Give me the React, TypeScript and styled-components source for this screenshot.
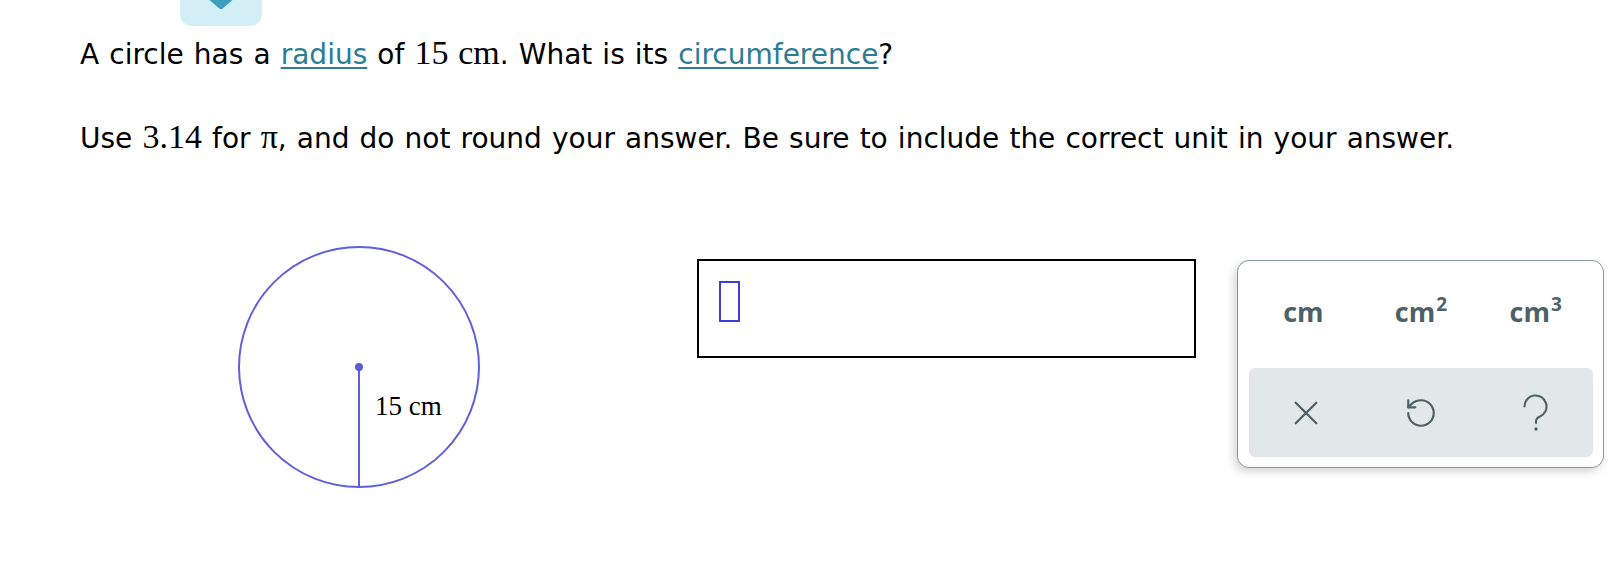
import React from "react";
import styled, { createGlobalStyle } from "styled-components";

const GlobalStyle = createGlobalStyle`
  html, body { margin: 0; padding: 0; background: #ffffff; }
  body { font-family: "DejaVu Sans", Verdana, sans-serif; color: #000; }
`;

const Page = styled.div`
  width: 1610px;
  height: 573px;
  overflow: hidden;
  padding-left: 80px;
  box-sizing: border-box;
`;

const TabRow = styled.div`
  height: 26px;
  padding-left: 100px;
`;

const Tab = styled.div`
  width: 82px;
  height: 26px;
  background: #d4eef5;
  border-radius: 0 0 12px 12px;
  display: flex;
  justify-content: center;
  align-items: flex-start;
`;

const Line = styled.p<{ $gap: number }>`
  margin: ${(p) => p.$gap}px 0 0;
  font-size: 28px;
  line-height: 40px;
  word-spacing: 1.2px;
  white-space: nowrap;
`;

const MathText = styled.span`
  font-family: "Liberation Serif", "Times New Roman", serif;
  font-size: 34px;
  line-height: 0;
`;

const Term = styled.span`
  color: #2b7d94;
  text-decoration: underline;
  text-decoration-thickness: 1.5px;
  text-underline-offset: 3px;
`;

const FigureRow = styled.div`
  margin-top: 83px;
  display: flex;
  align-items: flex-start;
`;

const Figure = styled.svg`
  margin-left: 154px;
  flex: none;
`;

const AnswerBox = styled.div`
  margin-left: 213px;
  margin-top: 17px;
  width: 499px;
  height: 99px;
  box-sizing: border-box;
  border: 2px solid #000;
  padding: 20px 0 0 20px;
  flex: none;
`;

const Cursor = styled.div`
  width: 21px;
  height: 41px;
  box-sizing: border-box;
  border: 2px solid #3d3dd4;
`;

const Keypad = styled.div`
  margin-left: 41px;
  margin-top: 18px;
  width: 367px;
  height: 208px;
  box-sizing: border-box;
  border: 1.5px solid #8a979b;
  border-radius: 12px;
  box-shadow: -3px 4px 9px rgba(0, 0, 0, 0.16);
  padding: 0 10px 10px 11px;
  display: flex;
  flex-direction: column;
  flex: none;
  background: #fff;
`;

const UnitRow = styled.div`
  flex: 1;
  display: grid;
  grid-template-columns: repeat(3, 1fr);
  align-items: center;
`;

const UnitKey = styled.div<{ $shift?: number }>`
  font-family: "Open Sans", Lato, sans-serif;
  font-weight: 700;
  font-size: 27px;
  line-height: 1;
  color: #4d6267;
  text-align: center;
  margin-top: -6px;
  margin-left: ${(p) => p.$shift ?? 0}px;
`;

const Sup = styled.sup`
  font-size: 19px;
  line-height: 0;
  vertical-align: 11px;
  margin-left: 1px;
`;

const ActionRow = styled.div`
  height: 89px;
  flex: none;
  background: #e2e7e9;
  border-radius: 6px;
  display: grid;
  grid-template-columns: repeat(3, 1fr);
  align-items: center;
  justify-items: center;
`;

const IconSvg = styled.svg`
  display: block;
  stroke: #4d6267;
  fill: none;
  stroke-linecap: round;
  stroke-linejoin: round;
`;

export default function App() {
  return (
    <>
      <GlobalStyle />
      <Page>
        <TabRow>
          <Tab>
            <svg width="24" height="10" viewBox="0 0 24 10">
              <path d="M0.5 0 H23.5 L13.6 8.6 Q12 9.8 10.4 8.6 Z" fill="#3c9fbf" />
            </svg>
          </Tab>
        </TabRow>
        <Line $gap={9}>
          A circle has a <Term>radius</Term> of <MathText>15 cm</MathText>. What is its{" "}
          <Term>circumference</Term>?
        </Line>
        <Line $gap={44}>
          Use <MathText>3.14</MathText> for <MathText>π</MathText>, and do not round your answer. Be
          sure to include the correct unit in your answer.
        </Line>
        <FigureRow>
          <Figure width="250" height="250" viewBox="0 0 250 250">
            <circle cx="125" cy="125" r="120" fill="none" stroke="#6060dc" strokeWidth="2" />
            <line x1="125" y1="125" x2="125" y2="245" stroke="#6060dc" strokeWidth="2" />
            <circle cx="125" cy="125" r="4" fill="#5b5bd8" />
            <text
              x="141"
              y="173"
              fontFamily='"Liberation Serif", "Times New Roman", serif'
              fontSize="27"
              fill="#000"
            >
              15 cm
            </text>
          </Figure>
          <AnswerBox>
            <Cursor />
          </AnswerBox>
          <Keypad>
            <UnitRow>
              <UnitKey $shift={-6}>cm</UnitKey>
              <UnitKey>
                cm<Sup>2</Sup>
              </UnitKey>
              <UnitKey>
                cm<Sup>3</Sup>
              </UnitKey>
            </UnitRow>
            <ActionRow>
              <IconSvg width="26" height="26" viewBox="0 0 24 24" strokeWidth="2.1">
                <path d="M2.5 2.5 L21.5 21.5 M21.5 2.5 L2.5 21.5" />
              </IconSvg>
              <IconSvg width="34" height="34" viewBox="0 0 24 24" strokeWidth="1.55">
                <path d="M3 12a9 9 0 1 0 9-9 9.75 9.75 0 0 0-6.74 2.74L3 8" />
                <path d="M3 3v5h5" />
              </IconSvg>
              <IconSvg width="26" height="38" viewBox="0 0 26 38" strokeWidth="2.1">
                <path d="M1.5 12.5 A11 11 0 1 1 17 22.5 C14.2 23.6 13 25 13 27.5 V29" />
                <circle cx="13" cy="35" r="1.7" fill="#4d6267" stroke="none" />
              </IconSvg>
            </ActionRow>
          </Keypad>
        </FigureRow>
      </Page>
    </>
  );
}
